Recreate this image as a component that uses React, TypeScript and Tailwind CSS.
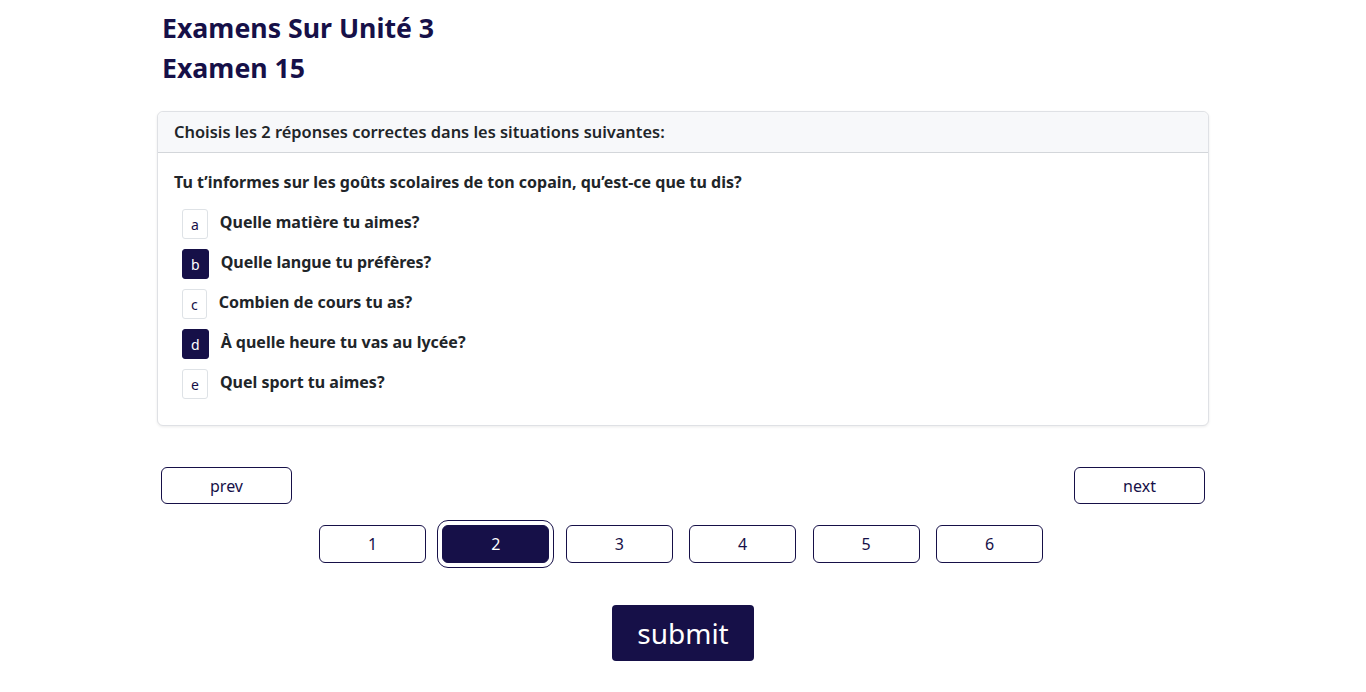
import React, { useState } from "react";

const options = [
  { key: "a", text: "Quelle matière tu aimes?" },
  { key: "b", text: "Quelle langue tu préfères?" },
  { key: "c", text: "Combien de cours tu as?" },
  { key: "d", text: "À quelle heure tu vas au lycée?" },
  { key: "e", text: "Quel sport tu aimes?" },
];

const pages = [1, 2, 3, 4, 5, 6];

const App = () => {
  const [selected, setSelected] = useState<string[]>(["b", "d"]);
  const [page, setPage] = useState(2);

  const toggle = (key: string) => {
    setSelected(prev => (prev.includes(key) ? prev.filter(k => k !== key) : [...prev, key]));
  };

  return (
    <div className="min-h-screen bg-white font-['Noto_Sans',sans-serif] text-[#212529]">
      <div className="mx-auto w-[1052px] pt-[12px]">
        {/* Titles */}
        <div className="pl-[5px]">
          <h3 className="mb-2 text-[26.7px] leading-[32px] font-bold text-[#161048]">Examens Sur Unité 3</h3>
          <h3 className="mb-2 text-[26.7px] leading-[32px] font-bold text-[#161048]">Examen 15</h3>
        </div>

        {/* Question card */}
        <div className="mt-[27px] rounded-md border border-[#dfe1e5] bg-white shadow-[0_1px_3px_rgba(0,0,0,0.08)]">
          <div className="rounded-t-md border-b border-[#d3d6da] bg-[#f7f8fa] px-4 py-[10px] text-[16.4px] leading-5 font-semibold">
            Choisis les 2 réponses correctes dans les situations suivantes:
          </div>
          <div className="px-4 pt-[19px] pb-[26px]">
            <p className="text-[16px] leading-5 font-bold">
              Tu t’informes sur les goûts scolaires de ton copain, qu’est-ce que tu dis?
            </p>
            <div className="mt-[17px] flex flex-col gap-[10px] pl-2">
              {options.map(o => {
                const on = selected.includes(o.key);
                return (
                  <div key={o.key} className="flex items-start gap-3 cursor-pointer" onClick={() => toggle(o.key)}>
                    <span
                      className={
                        on
                          ? "flex h-[30px] items-center rounded-[3px] border border-[#161048] bg-[#161048] px-2 text-[14px] text-white"
                          : "flex h-[30px] items-center rounded-[3px] border border-[#dee2e6] bg-white px-2 text-[14px] text-[#161048]"
                      }
                    >
                      {o.key}
                    </span>
                    <span className="text-[16px] leading-[26px] font-bold">{o.text}</span>
                  </div>
                );
              })}
            </div>
          </div>
        </div>

        {/* Prev / next */}
        <div className="mt-[41px] flex justify-between px-[4px]">
          <button
            className="h-[37px] w-[131px] rounded-md border border-[#161048] bg-white text-[16px] text-[#161048]"
            onClick={() => setPage(p => Math.max(1, p - 1))}
          >
            prev
          </button>
          <button
            className="h-[37px] w-[131px] rounded-md border border-[#161048] bg-white text-[16px] text-[#161048]"
            onClick={() => setPage(p => Math.min(6, p + 1))}
          >
            next
          </button>
        </div>

        {/* Page numbers */}
        <div className="mt-[21px] flex justify-center gap-[16.4px] pr-[4px]">
          {pages.map(n => (
            <button
              key={n}
              onClick={() => setPage(n)}
              className={
                n === page
                  ? "h-[38px] w-[107px] rounded-md border border-[#161048] bg-[#161048] text-[16px] text-white outline outline-1 outline-offset-4 outline-[#161048]"
                  : "h-[38px] w-[107px] rounded-md border border-[#161048] bg-white text-[16px] text-[#161048]"
              }
            >
              {n}
            </button>
          ))}
        </div>

        {/* Submit */}
        <div className="mt-[42px] flex justify-center">
          <button className="h-[56px] w-[142px] rounded-[4px] bg-[#161048] text-[28px] text-white">submit</button>
        </div>
      </div>
    </div>
  );
};

export default App;
